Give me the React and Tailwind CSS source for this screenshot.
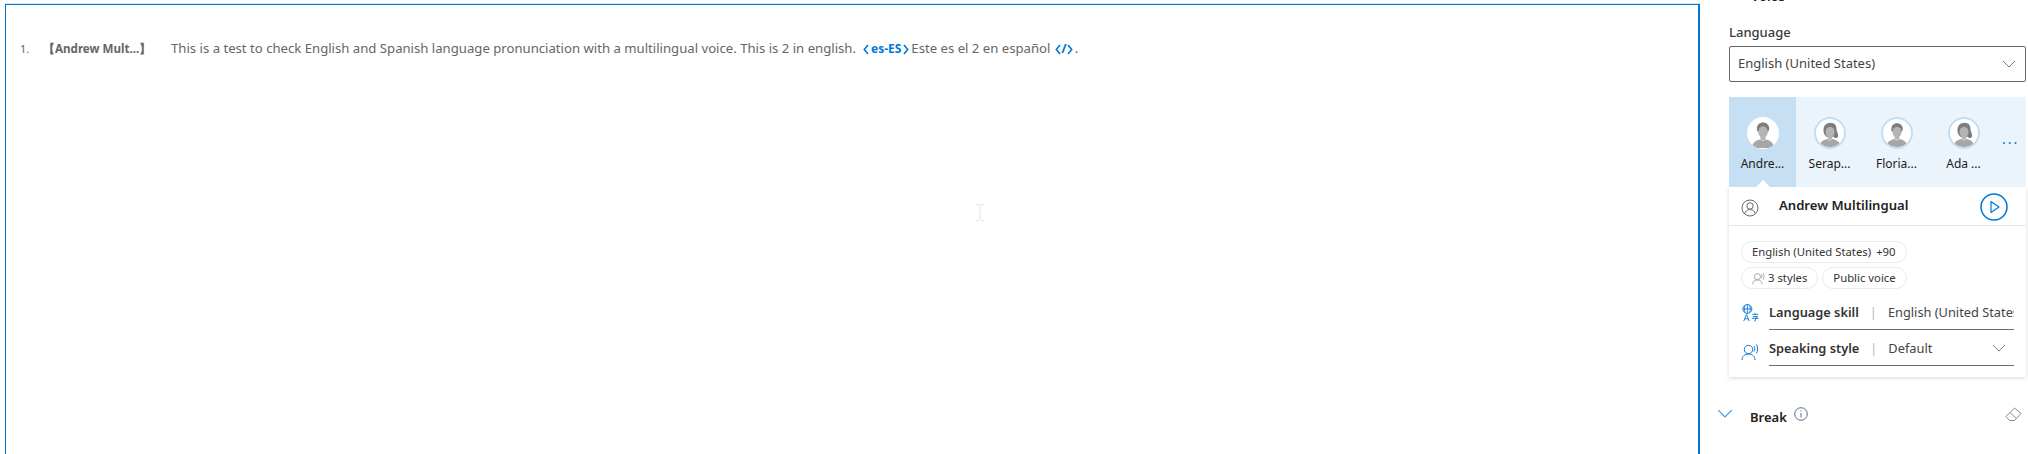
const FONT = "font-['Noto_Sans','Open_Sans',sans-serif]";

function Chevron({ className, color = "#7a7a7a" }) {
  return (
    <svg className={className} width="14" height="8" viewBox="0 0 14 8" fill="none">
      <path d="M1 1l6 6 6-6" stroke={color} strokeWidth="1" />
    </svg>
  );
}

function TagMark({ dir }) {
  return (
    <svg width="6" height="11" viewBox="0 0 6 11" fill="none" className="shrink-0">
      <path d={dir === "l" ? "M5 1L1.300 5.500 5 10" : "M1 1l3.700 4.500L1 10"} stroke="#0078d4" strokeWidth="1.600" />
    </svg>
  );
}

function Avatar({ female, ring }) {
  return (
    <div className={`w-8 h-8 rounded-full bg-white overflow-hidden flex items-center justify-center shrink-0 ${ring ? "border-2 border-[#c3def3]" : ""}`}>
      <svg width="30" height="30" viewBox="0 0 30 30">
        {female && <path d="M8 12c0-5 3-8 7.500-8S22 7 22 11c0 3 2.500 5 1.500 8-1 2-3.500 1.500-4.500 0H11c-2-2-3-4-3-7z" fill="#7d7d7d" />}
        {!female && <path d="M9 12.500c-.8-5.500 2.500-8 6-8s7 2.500 6 7.500l-1 2H10.500z" fill="#7d7d7d" />}
        <ellipse cx="15" cy="14" rx="4.800" ry="5.800" fill="#b4b4b4" />
        <path d="M12.500 18h5v3.500l-2.500 1-2.500-1z" fill="#b4b4b4" />
        <path d="M4 30c0-5 3.500-7.500 8-8.500l3 1.500 3-1.500c4.500 1 8 3.500 8 8.500z" fill="#a6a6a6" />
      </svg>
    </div>
  );
}

function VoiceTab({ name, female, selected }) {
  return (
    <div className={`relative w-[67px] h-full flex flex-col items-center pt-[20px] ${selected ? "bg-[#c7dff3]" : ""}`}>
      <Avatar female={female} ring={!selected} />
      <span className="mt-[7px] text-[12px] leading-[16px] text-[#1b1b1b]">{name}</span>
      {selected && <span className="absolute bottom-0 left-1/2 -translate-x-1/2 w-0 h-0 border-x-[7px] border-x-transparent border-b-[7px] border-b-white" />}
    </div>
  );
}

function Chip({ children }) {
  return (
    <span className="inline-flex items-center h-[22px] px-[10px] rounded-full border border-[#ebebeb] text-[11.300px] text-[#333] whitespace-nowrap">
      {children}
    </span>
  );
}

function SpeakIcon({ color, size = 18 }) {
  return (
    <svg width={size} height={size} viewBox="0 0 18 18" fill="none" stroke={color} strokeWidth="1">
      <circle cx="7.500" cy="6.500" r="4.200" />
      <path d="M1 17c0-3.500 2.500-6 6.500-6S14 13.500 14 17" />
      <path d="M13 3c1 1.500 1 4 0 5.500M15.500 1.500c1.500 2.500 1.500 6.500 0 9" />
    </svg>
  );
}

function Field({ icon, iconClass, label, value, trailing }) {
  return (
    <div className="flex items-start pl-[12px] pr-[12px] h-[36px]">
      <div className={`w-[28px] shrink-0 ${iconClass}`}>{icon}</div>
      <div className="flex-1 min-w-0 h-[32px] pb-[3px] border-b border-[#6e6e6e] flex items-center text-[12.800px] whitespace-nowrap overflow-hidden">
        <span className="font-semibold text-[#333]">{label}</span>
        <span className="mx-[11px] text-[#c8b8a8]">|</span>
        <span className="text-[#444] flex-1">{value}</span>
        {trailing}
      </div>
    </div>
  );
}

export default function App() {
  return (
    <div className={`${FONT} w-[2028px] h-[454px] overflow-hidden bg-white flex`}>
      <main className="w-[1700px] shrink-0 pt-[4px] pl-[5px]">
        <div className="h-[460px] border-t border-t-[#0078d4] border-l border-r-2 border-[#0078d4] shadow-[0_-1px_0_#d5e6f5] pt-[34px] relative">
          <div className="flex items-center h-[20px] text-[13.150px] text-[#666] whitespace-nowrap">
            <span className="ml-[14px] w-[23px] text-[11px]">1.</span>
            <span className="w-[128px] font-bold text-[11.600px]">【Andrew Mult...】</span>
            <span>This is a test to check English and Spanish language pronunciation with a multilingual voice. This is 2 in english.</span>
            <span className="ml-[7px] flex items-center gap-[2px] font-bold text-[#0078d4] text-[12px]">
              <TagMark dir="l" />es-ES<TagMark dir="r" />
            </span>
            <span className="ml-[2px]">Este es el 2 en español</span>
            <span className="ml-[5px] mr-[2px] flex items-center font-bold text-[#0078d4] text-[13px]">
              <TagMark dir="l" />/<TagMark dir="r" />
            </span>
            <span>.</span>
          </div>
          <svg width="8" height="17" viewBox="0 0 8 17" fill="none" stroke="#e4e4e4" strokeWidth="1" className="absolute left-[970px] top-[199px]">
            <path d="M0 .5h3l1 1 1-1h3M4 1.500v14M0 16.500h3l1-1 1 1h3" />
          </svg>
        </div>
      </main>

      <aside className="flex-1 min-w-0 pl-[29px] pr-[2px]">
        <div className="h-[3px] overflow-hidden relative">
          <span className="absolute left-[22px] -top-[13px] text-[13px] font-semibold text-[#222]">Voice</span>
        </div>
        <div className="mt-[20px] text-[13px] leading-[18px] text-[#3a3a3a] font-medium">Language</div>
        <div className="mt-[5px] h-[36px] border border-[#666] rounded-[2px] flex items-center justify-between pl-[8px] pr-[9px] text-[13px] text-[#444]">
          <span>English (United States)</span>
          <Chevron />
        </div>

        <div className="mt-[15px] h-[90px] bg-[#ebf4fb] flex relative">
          <VoiceTab name="Andre..." selected />
          <VoiceTab name="Serap..." female />
          <VoiceTab name="Floria..." />
          <VoiceTab name="Ada ..." female />
          <span className="ml-[5px] mt-[32px] text-[#0078d4] text-[14px] tracking-[2px] leading-[20px]">...</span>
        </div>

        <section className="h-[190px] bg-white shadow-[0_1px_4px_rgba(0,0,0,0.16)]">
          <div className="h-[39px] border-b border-[#e6e6e6] flex items-center pl-[12px] pr-[18px]">
            <svg width="18" height="18" viewBox="0 0 18 18" fill="none" stroke="#6a6a6a" strokeWidth="1" className="mt-[4px]">
              <circle cx="9" cy="9" r="8" />
              <circle cx="9" cy="7" r="3.200" />
              <path d="M3.500 15c.8-3 3-4.500 5.500-4.500s4.700 1.500 5.500 4.500" />
            </svg>
            <span className="ml-[20px] text-[13.100px] font-semibold text-[#222] flex-1">Andrew Multilingual</span>
            <svg width="28" height="28" viewBox="0 0 28 28" fill="none" className="mt-[1px]">
              <circle cx="14" cy="14" r="13" stroke="#0078d4" strokeWidth="1.500" />
              <path d="M11 8.500v11l8-5.500z" stroke="#0078d4" strokeWidth="1.200" strokeLinejoin="round" />
            </svg>
          </div>
          <div className="pl-[12px] pt-[12px] flex flex-col gap-[4px]">
            <div><Chip>English (United States)<span className="ml-[5px]">+90</span></Chip></div>
            <div className="flex gap-[4px]">
              <Chip><span className="mr-[3px]"><SpeakIcon color="#8a8a8a" size={13} /></span>3 styles</Chip>
              <Chip>Public voice</Chip>
            </div>
          </div>
          <div className="mt-[9px]">
            <Field
              label="Language skill"
              value="English (United States)"
              iconClass="pt-[6px]"
              icon={
                <svg width="19" height="18" viewBox="0 0 19 20" fill="none" stroke="#0f78d0" strokeWidth="1">
                  <circle cx="6" cy="5.500" r="5" />
                  <path d="M1 5.500h10M6 .5v10M3.500 1.500c-1 2.500-1 5.500 0 8M8.500 1.500c1 2.500 1 5.500 0 8" />
                  <path d="M2 19l3-7.500L8 19M3 16.500h4" />
                  <path d="M11.500 11.500h6.500M14.500 10v1.500M12 14h5.500l-2.500 1.500v3l-1.500.5M11 16h7.500" />
                </svg>
              }
            />
            <Field
              label="Speaking style"
              value="Default"
              iconClass="pt-[9px]"
              icon={<SpeakIcon color="#0f78d0" />}
              trailing={<Chevron className="mr-[8px] shrink-0" />}
            />
          </div>
        </section>

        <div className="mt-[27px] flex items-center relative h-[24px]">
          <Chevron color="#3d93dc" className="ml-[-12px] mb-[6px] w-[16px] h-[9px]" />
          <span className="ml-[17px] mt-[3px] text-[13px] font-semibold text-[#222]">Break</span>
          <svg width="14" height="14" viewBox="0 0 14 14" fill="none" stroke="#5b6f86" strokeWidth="1" className="ml-[7px] mb-[4px]">
            <circle cx="7" cy="7" r="6.300" />
            <path d="M7 6v4.500M7 3.500v1" />
          </svg>
          <svg width="17" height="15" viewBox="0 0 17 15" fill="none" stroke="#8a8a8a" strokeWidth="1" className="ml-auto mr-[4px] mb-[4px]">
            <path d="M1 9.500L9.500 1l6.500 5.500-6.500 7H4.500z" />
            <path d="M5 5.500l6 5.500" />
          </svg>
        </div>
        <div className="mt-[23px] ml-[11px] text-[13px] leading-[18px] text-[#333] whitespace-nowrap">Sentence boundary silence</div>
      </aside>
    </div>
  );
}
